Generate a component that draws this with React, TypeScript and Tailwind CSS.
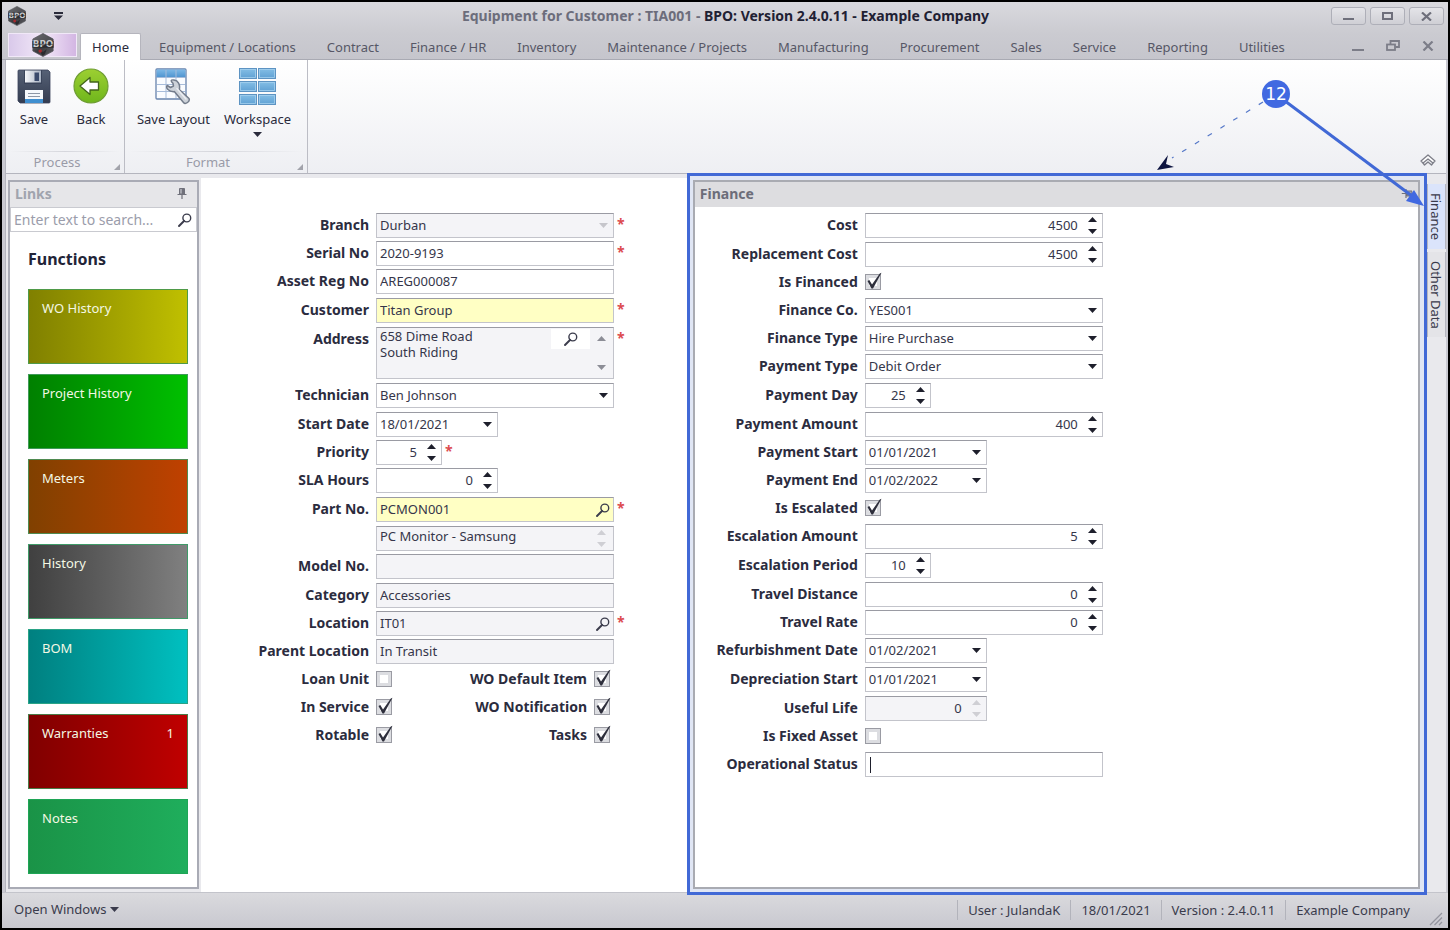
import React, { useId, useState } from "react";

type Option = { value: string };

/* ---------- small drawings ---------- */

function Triangle({ up = false, className = "" }: { up?: boolean; className?: string }) {
  return (
    <svg width="9" height="5" viewBox="0 0 9 5" className={`shrink-0 ${className}`} aria-hidden="true">
      <path d={up ? "M0 5L4.5 0L9 5Z" : "M0 0H9L4.5 5Z"} fill="currentColor" />
    </svg>
  );
}

function Magnifier() {
  return (
    <svg width="14" height="14" viewBox="0 0 14 14" fill="none" aria-hidden="true">
      <circle cx="8.8" cy="5" r="3.9" stroke="#3b3c4c" strokeWidth="1.4" />
      <path d="M6 8L1 13" stroke="#3b3c4c" strokeWidth="1.9" strokeLinecap="round" />
    </svg>
  );
}

function HexLogo({ className }: { className: string }) {
  return (
    <svg viewBox="0 0 24 26" className={className} aria-hidden="true">
      <defs>
        <linearGradient id="hex" x1="0" y1="0" x2="1" y2="1">
          <stop offset="0" stopColor="#77787c" />
          <stop offset="0.5" stopColor="#3a3b3f" />
          <stop offset="1" stopColor="#5b5b60" />
        </linearGradient>
      </defs>
      <path d="M12 0.5L23 6.5V19.5L12 25.5L1 19.5V6.5Z" fill="url(#hex)" stroke="#55565b" strokeWidth="0.8" />
      <path d="M12 1L23 7L12 12L1 7Z" fill="#606165" opacity="0.6" />
      <path d="M8 18L12 20.500L16 17.500L14 23L11 24.500Z" fill="#2a2a2e" />
      <rect x="0.500" y="8.500" width="23" height="7.500" fill="#2c2d31" />
      <text x="12" y="15.500" textAnchor="middle" fontFamily="DejaVu Sans, sans-serif" fontWeight="bold" fontSize="9.500" fill="#c9cacd">
        BPO
      </text>
      <path d="M1 12.300H23" stroke="#2c2d31" strokeWidth="0.700" />
      <circle cx="9" cy="19.500" r="1.900" fill="#a52a2e" />
    </svg>
  );
}

function SaveIcon() {
  return (
    <svg width="34" height="35" viewBox="0 0 34 35" aria-hidden="true">
      <defs>
        <linearGradient id="sv" x1="0" y1="0" x2="0" y2="1">
          <stop offset="0" stopColor="#566176" />
          <stop offset="1" stopColor="#333c50" />
        </linearGradient>
        <linearGradient id="svm" x1="0" y1="0" x2="1" y2="0">
          <stop offset="0" stopColor="#f4f6f9" />
          <stop offset="1" stopColor="#a9b3c3" />
        </linearGradient>
      </defs>
      <path d="M1 2Q1 1 2 1H31L33 3V33Q33 34 32 34H3L1 32Z" fill="url(#sv)" stroke="#3a435a" strokeWidth="0.8" />
      <rect x="7" y="1" width="18" height="14" fill="#3a445a" />
      <rect x="8" y="1.500" width="16" height="12" fill="url(#svm)" />
      <rect x="17.500" y="3.500" width="4.500" height="8.500" fill="#3a4a6c" />
      <rect x="8" y="21" width="18" height="13" fill="#f5f8fb" />
      <rect x="8" y="30" width="18" height="4" fill="#3f8fd0" />
      <path d="M11 24.500H23M11 27.500H23" stroke="#8d97a6" strokeWidth="1.200" />
    </svg>
  );
}

function BackIcon() {
  return (
    <svg width="36" height="36" viewBox="0 0 36 36" aria-hidden="true">
      <defs>
        <linearGradient id="bk" x1="0" y1="0" x2="0" y2="1">
          <stop offset="0" stopColor="#9ccf32" />
          <stop offset="1" stopColor="#6fb61c" />
        </linearGradient>
      </defs>
      <circle cx="18" cy="18" r="17" fill="url(#bk)" stroke="#6f9d34" strokeWidth="1.200" />
      <path d="M7 18L17 9.500V14H25.500V22H17V26.500Z" fill="#fff" stroke="#41641a" strokeWidth="1.300" strokeLinejoin="round" />
    </svg>
  );
}

function LayoutIcon() {
  return (
    <svg width="36" height="37" viewBox="0 0 36 37" aria-hidden="true">
      <defs>
        <linearGradient id="ly" x1="0" y1="0" x2="0" y2="1">
          <stop offset="0" stopColor="#7db8e6" />
          <stop offset="1" stopColor="#4d93cf" />
        </linearGradient>
      </defs>
      <rect x="1" y="1" width="30" height="30" rx="1" fill="#fafcff" stroke="#6783ad" strokeWidth="1.300" />
      <rect x="1.500" y="1.500" width="29" height="8" fill="url(#ly)" />
      <path d="M11 2V30M21 2V30M2 9.500H30M2 16.500H30M2 23.500H30" stroke="#a7bcda" strokeWidth="1" />
      <path
        d="M19 12C15.500 11.500 15.500 13 18 15.300L18.500 18L15.500 19.500L12.200 17.500C10.500 19.500 13.500 24 19.300 23.600L28.500 34.500C30.500 37 35.300 33.300 34 30.500L24.300 21.500C25.500 16.500 23 12.500 19 12Z"
        fill="#cdd2d9"
        stroke="#737c8b"
        strokeWidth="1.500"
        strokeLinejoin="round"
      />
      <path d="M22 20.500L31 31" stroke="#eceef2" strokeWidth="1.500" strokeLinecap="round" />
    </svg>
  );
}

function WorkspaceIcon() {
  const cells = [
    [0, 0], [19, 0], [0, 13], [19, 13], [0, 26], [19, 26],
  ];
  return (
    <svg width="37" height="37" viewBox="0 0 37 37" aria-hidden="true">
      <defs>
        <linearGradient id="ws" x1="0" y1="0" x2="0" y2="1">
          <stop offset="0" stopColor="#85bfe6" />
          <stop offset="1" stopColor="#5fa0d3" />
        </linearGradient>
      </defs>
      {cells.map(([x, y]) => (
        <g key={`${x}-${y}`}>
          <rect x={x + 0.5} y={y + 0.5} width="17" height="10" fill="url(#ws)" stroke="#5d93c2" />
          <rect x={x + 1.5} y={y + 1.5} width="15" height="8" fill="none" stroke="#a5d0ee" strokeWidth="0.800" />
        </g>
      ))}
    </svg>
  );
}

function Pin() {
  return (
    <svg width="10" height="11" viewBox="0 0 10 11" aria-hidden="true">
      <path d="M2.500 0.500H7.500V6H2.500Z" fill="#a5a6ae" stroke="#70717b" />
      <path d="M6 1V6" stroke="#70717b" strokeWidth="2" />
      <path d="M0.500 6.500H9.500M5 6.500V11" stroke="#70717b" strokeWidth="1.200" />
    </svg>
  );
}

function Corner() {
  return (
    <svg width="6" height="6" viewBox="0 0 6 6" className="mb-[3px] self-end" aria-hidden="true">
      <path d="M6 0V6H0Z" fill="#a2a3ab" />
    </svg>
  );
}

/* ---------- form parts ---------- */

const BOX = "flex h-[25px] border border-[#c3c4cb] border-t-[#9a9ba3]";
const TEXT = "min-w-0 flex-1 bg-transparent text-[13px] text-[#35364a] outline-none";
const LABEL = "mr-[7px] shrink-0 text-right text-[14px] leading-[23px] font-bold whitespace-nowrap text-[#2b2c3e]";
const WIDE = "w-[238px]";
const DATE = "w-[122px]";
const SPIN = "w-[66px]";

function Row({ label, id, tall, labelWidth, children, required }: {
  label: string; id: string; tall?: boolean; labelWidth: string; children: React.ReactNode; required?: boolean;
}) {
  return (
    <div className={`flex items-start ${tall ? "min-h-[29px]" : "min-h-[28px]"}`}>
      <label htmlFor={id} className={`${LABEL} ${labelWidth}`}>
        {label}
      </label>
      {children}
      {required && <span className="ml-[3px] text-[14px] leading-[21px] font-bold text-[#dc4a50]">*</span>}
    </div>
  );
}

function SpinButtons({ muted }: { muted?: boolean }) {
  return (
    <span className={`flex w-[19px] shrink-0 flex-col items-center justify-center gap-[7px] ${muted ? "text-[#cfcfd4]" : "text-[#1e1f2c]"}`}>
      <button type="button" aria-label="Increase" disabled={muted}><Triangle up className="block" /></button>
      <button type="button" aria-label="Decrease" disabled={muted}><Triangle className="block" /></button>
    </span>
  );
}

type Kind = "text" | "search" | "select" | "date" | "spin" | "check" | "address" | "memo";

type FieldDef = {
  label: string;
  kind: Kind;
  value?: string;
  tone?: "yellow" | "grey";
  size?: string;
  tall?: boolean;
  required?: boolean;
  checked?: boolean;
  muted?: boolean;
  caret?: boolean;
  second?: { label: string; checked: boolean };
};

function CheckBox({ id, checked }: { id: string; checked?: boolean }) {
  const [on, setOn] = useState(!!checked);
  return (
    <span className="relative mt-1 block size-4 shrink-0">
      <input
        id={id}
        type="checkbox"
        checked={on}
        onChange={(e) => setOn(e.target.checked)}
        className="block size-4 appearance-none border border-[#9a9ba3] bg-white shadow-[inset_0_0_0_3px_#dcdde1]"
      />
      {on && (
        <svg width="18" height="18" viewBox="0 0 18 18" className="pointer-events-none absolute -top-[2px] left-0" aria-hidden="true">
          <path d="M2.500 9L4.300 8L7 12.500L14.800 1.500L16.500 0.800L8 16.500H6.500Z" fill="#2e2f3c" />
        </svg>
      )}
    </span>
  );
}

function Field({ def, labelWidth }: { def: FieldDef; labelWidth: string }) {
  const id = useId();
  const tone = def.tone === "yellow" ? "bg-[#ffffc4]" : def.tone === "grey" ? "bg-[#f4f4f7]" : "bg-white";
  const size = def.size ?? WIDE;
  let control: React.ReactNode = null;

  if (def.kind === "check") {
    control = (
      <>
        <CheckBox id={id} checked={def.checked} />
        {def.second && (
          <>
            <label htmlFor={`${id}-b`} className={`${LABEL} w-[195px]`}>
              {def.second.label}
            </label>
            <CheckBox id={`${id}-b`} checked={def.second.checked} />
          </>
        )}
      </>
    );
  } else if (def.kind === "select") {
    const options: Option[] = [{ value: def.value ?? "" }];
    control = (
      <span className={`relative ${BOX} ${tone} ${size}`}>
        <select id={id} defaultValue={def.value} className={`${TEXT} appearance-none pl-[3px]`}>
          {options.map((o) => <option key={o.value}>{o.value}</option>)}
        </select>
        <span className={`pointer-events-none flex w-[19px] items-center justify-center ${def.muted ? "text-[#c6c6cb]" : "text-[#1e1f2c]"}`}>
          <Triangle />
        </span>
      </span>
    );
  } else if (def.kind === "date") {
    control = (
      <span className={`${BOX} ${tone} ${size}`}>
        <input id={id} defaultValue={def.value} className={`${TEXT} pl-[3px]`} />
        <button type="button" aria-label="Open calendar" className="flex w-[19px] shrink-0 items-center justify-center text-[#1e1f2c]">
          <Triangle />
        </button>
      </span>
    );
  } else if (def.kind === "spin") {
    control = (
      <span className={`${BOX} ${tone} ${size}`}>
        <input id={id} defaultValue={def.value} className={`${TEXT} pr-[5px] text-right`} />
        <SpinButtons muted={def.muted} />
      </span>
    );
  } else if (def.kind === "address") {
    control = (
      <span className={`flex h-[52px] border border-[#c3c4cb] border-t-[#9a9ba3] ${tone} ${size} mb-1`}>
        <textarea id={id} defaultValue={def.value} className={`${TEXT} resize-none overflow-hidden pl-[3px] leading-[16px]`} />
        <button type="button" aria-label="Find address" className="mt-px flex h-5 w-[39px] items-center justify-center bg-white"><Magnifier /></button>
        <span className="flex w-[23px] flex-col items-center justify-between py-2 text-[#8c8d96]">
          <Triangle up />
          <Triangle />
        </span>
      </span>
    );
  } else if (def.kind === "memo") {
    control = (
      <span className={`${BOX} ${tone} ${size}`}>
        <input id={id} aria-label="Part description" defaultValue={def.value} className={`${TEXT} pb-[3px] pl-[3px]`} />
        <span className="flex w-[23px] flex-col items-center justify-center gap-[7px] text-[#cfcfd4]">
          <Triangle up />
          <Triangle />
        </span>
      </span>
    );
  } else {
    control = (
      <span className={`${BOX} ${tone} ${size}`}>
        {def.caret && <span className="ml-1 h-4 w-px self-center bg-[#1e1f2c]" />}
        <input id={id} defaultValue={def.value} className={`${TEXT} pl-[3px]`} />
        {def.kind === "search" && (
          <button type="button" aria-label={`Find ${def.label}`} className="flex w-[21px] items-center justify-center"><Magnifier /></button>
        )}
      </span>
    );
  }

  return (
    <Row label={def.label} id={id} tall={def.tall} labelWidth={labelWidth} required={def.required}>
      {control}
    </Row>
  );
}

const EQUIPMENT: FieldDef[] = [
  { label: "Branch", kind: "select", value: "Durban", tone: "grey", muted: true, required: true },
  { label: "Serial No", kind: "text", value: "2020-9193", required: true },
  { label: "Asset Reg No", kind: "text", value: "AREG000087", tall: true },
  { label: "Customer", kind: "text", value: "Titan Group", tone: "yellow", required: true, tall: true },
  { label: "Address", kind: "address", value: "658 Dime Road\nSouth Riding", tone: "grey", required: true },
  { label: "Technician", kind: "select", value: "Ben Johnson", tall: true },
  { label: "Start Date", kind: "date", value: "18/01/2021", size: DATE },
  { label: "Priority", kind: "spin", value: "5", size: SPIN, required: true },
  { label: "SLA Hours", kind: "spin", value: "0", size: DATE, tall: true },
  { label: "Part No.", kind: "search", value: "PCMON001", tone: "yellow", required: true, tall: true },
  { label: "", kind: "memo", value: "PC Monitor - Samsung", tone: "grey" },
  { label: "Model No.", kind: "text", value: "", tone: "grey", tall: true },
  { label: "Category", kind: "text", value: "Accessories", tone: "grey" },
  { label: "Location", kind: "search", value: "IT01", tone: "grey", required: true },
  { label: "Parent Location", kind: "text", value: "In Transit", tone: "grey" },
  { label: "Loan Unit", kind: "check", second: { label: "WO Default Item", checked: true } },
  { label: "In Service", kind: "check", checked: true, second: { label: "WO Notification", checked: true } },
  { label: "Rotable", kind: "check", checked: true, second: { label: "Tasks", checked: true } },
];

const FINANCE: FieldDef[] = [
  { label: "Cost", kind: "spin", value: "4500", tall: true },
  { label: "Replacement Cost", kind: "spin", value: "4500" },
  { label: "Is Financed", kind: "check", checked: true },
  { label: "Finance Co.", kind: "select", value: "YES001" },
  { label: "Finance Type", kind: "select", value: "Hire Purchase" },
  { label: "Payment Type", kind: "select", value: "Debit Order", tall: true },
  { label: "Payment Day", kind: "spin", value: "25", size: SPIN, tall: true },
  { label: "Payment Amount", kind: "spin", value: "400" },
  { label: "Payment Start", kind: "date", value: "01/01/2021", size: DATE },
  { label: "Payment End", kind: "date", value: "01/02/2022", size: DATE },
  { label: "Is Escalated", kind: "check", checked: true },
  { label: "Escalation Amount", kind: "spin", value: "5", tall: true },
  { label: "Escalation Period", kind: "spin", value: "10", size: SPIN, tall: true },
  { label: "Travel Distance", kind: "spin", value: "0" },
  { label: "Travel Rate", kind: "spin", value: "0" },
  { label: "Refurbishment Date", kind: "date", value: "01/02/2021", size: DATE, tall: true },
  { label: "Depreciation Start", kind: "date", value: "01/01/2021", size: DATE, tall: true },
  { label: "Useful Life", kind: "spin", value: "0", size: DATE, tone: "grey", muted: true },
  { label: "Is Fixed Asset", kind: "check" },
  { label: "Operational Status", kind: "text", value: "", caret: true },
];

const MENU = [
  "Equipment / Locations", "Contract", "Finance / HR", "Inventory", "Maintenance / Projects", "Manufacturing",
  "Procurement", "Sales", "Service", "Reporting", "Utilities",
];

const TILES = [
  { name: "WO History", look: "from-[#808000] to-[#c0c000] border-[#4f9a48]" },
  { name: "Project History", look: "from-[#008000] to-[#00c000] border-[#3f9a58]" },
  { name: "Meters", look: "from-[#804000] to-[#c04000] border-[#4f8a50]" },
  { name: "History", look: "from-[#404040] to-[#808080] border-[#3f9a68]" },
  { name: "BOM", look: "from-[#008080] to-[#00c0c0] border-[#2aa386]" },
  { name: "Warranties", count: "1", look: "from-[#800000] to-[#c00000] border-[#4a7a48]" },
  { name: "Notes", look: "from-[#1a9347] to-[#1fae5c] border-[#1fa556]" },
];

/* ---------- window ---------- */

function TitleBar() {
  const button = "flex h-[18px] w-[35px] items-center justify-center rounded-[3px] border border-[#aeafb8] bg-gradient-to-b from-[#e4e4e8] to-[#cfcfd5]";
  return (
    <header className="flex h-[31px] items-start bg-gradient-to-b from-[#d9d9de] to-[#cbcbd1] pr-1 pl-[5px]">
      <div className="flex flex-1 items-center gap-[27px] pt-1">
        <HexLogo className="h-5 w-5" />
        <button type="button" aria-label="Customise toolbar">
          <svg width="9" height="8" viewBox="0 0 9 8" aria-hidden="true">
            <path d="M0 0H9V2H0ZM0 3.500H9L4.500 8Z" fill="#2a2b3a" />
          </svg>
        </button>
      </div>
      <h1 className="pt-1 text-[14px] leading-5 font-bold text-[#1f2133]">
        <span className="text-[#6c6d7b]">Equipment for Customer : TIA001 - </span>
        BPO: Version 2.4.0.11 - Example Company
      </h1>
      <div className="flex flex-1 justify-end gap-1 pt-[5px]">
        <button type="button" aria-label="Minimise" className={button}>
          <svg width="11" height="10"><path d="M0 8H11" stroke="#6e6f7b" strokeWidth="2" /></svg>
        </button>
        <button type="button" aria-label="Maximise" className={button}>
          <svg width="11" height="9"><rect x="1" y="1" width="9" height="6" fill="none" stroke="#6e6f7b" strokeWidth="2" /></svg>
        </button>
        <button type="button" aria-label="Close" className={button}>
          <svg width="11" height="9"><path d="M1 0.500L10 8.500M10 0.500L1 8.500" stroke="#6e6f7b" strokeWidth="2.200" /></svg>
        </button>
      </div>
    </header>
  );
}

function Tabs() {
  return (
    <nav className="flex h-[27px] items-stretch bg-gradient-to-b from-[#cbcbd1] to-[#c5c5cc] pr-[14px] pl-[6px] text-[13px] text-[#565766] shadow-[inset_0_-1px_0_#a9aab3]">
      <button type="button" aria-label="Application menu" className="mb-[3px] flex w-[69px] items-center justify-center border border-[#f1e8f8] bg-gradient-to-r from-[#d9c9ea] via-[#f2e8f8] to-[#d3b6e3]">
        <HexLogo className="h-6 w-6" />
      </button>
      <button type="button" className="ml-[3px] w-[61px] rounded-t-[2px] border border-b-0 border-[#b5b5bd] bg-white pt-px text-[#2a2b3c]">Home</button>
      <div className="ml-[18px] flex flex-1 gap-[31px]">
        {MENU.map((m) => (
          <button type="button" key={m} className="pt-[2px] whitespace-nowrap">{m}</button>
        ))}
      </div>
      <div className="flex items-center gap-[22px] pb-[2px]">
        <button type="button" aria-label="Minimise child window">
          <svg width="12" height="12" className="block"><path d="M0 10H12" stroke="#7c7d88" strokeWidth="2" /></svg>
        </button>
        <button type="button" aria-label="Restore child window">
          <svg width="14" height="11" fill="none" stroke="#7c7d88" strokeWidth="1.800" className="block">
            <path d="M4.500 4V1H13V7H9.500" /><rect x="1" y="4.500" width="8" height="5.500" />
          </svg>
        </button>
        <button type="button" aria-label="Close child window">
          <svg width="12" height="10" className="block"><path d="M1.500 0.500L10.500 9.500M10.500 0.500L1.500 9.500" stroke="#7c7d88" strokeWidth="2.200" /></svg>
        </button>
      </div>
    </nav>
  );
}

function Tool({ icon, label, menu }: { icon: React.ReactNode; label: string; menu?: boolean }) {
  return (
    <button type="button" className="flex flex-col items-center text-[13px] leading-5 whitespace-nowrap text-[#2a2b3c]">
      <span className="mb-[2px] flex h-[42px] items-center">{icon}</span>
      <span>{label}</span>
      {menu && <Triangle className="mt-[3px]" />}
    </button>
  );
}

function Group({ name, children, className }: { name: string; children: React.ReactNode; className: string }) {
  return (
    <section aria-label={name} className={`flex flex-col border-r border-[#bcbdc5] ${className}`}>
      <div className="flex flex-1 items-start justify-center gap-[14px] pt-[5px] pr-1">{children}</div>
      <div className="mx-1 flex items-center bg-[linear-gradient(to_right,transparent,#d5d6dc,transparent)] bg-[length:100%_1px] bg-no-repeat">
        <span className="flex-1 pr-[10px] text-center text-[13px] leading-[22px] text-[#9a9ba8]">{name}</span>
        <Corner />
      </div>
    </section>
  );
}

function Ribbon() {
  return (
    <div className="ml-[3px] mr-[2px] flex h-[114px] border-b border-l border-[#b4b5be] bg-gradient-to-b from-white to-[#eeeff3]">
      <Group name="Process" className="w-[119px]">
        <div className="flex gap-[22px]">
          <Tool icon={<SaveIcon />} label="Save" />
          <Tool icon={<BackIcon />} label="Back" />
        </div>
      </Group>
      <Group name="Format" className="w-[183px]">
        <Tool icon={<LayoutIcon />} label="Save Layout" />
        <Tool icon={<WorkspaceIcon />} label="Workspace" menu />
      </Group>
      <div className="flex flex-1 items-end justify-end pr-[10px] pb-[7px]">
        <button type="button" aria-label="Collapse ribbon">
          <svg width="16" height="12" viewBox="0 0 16 12" fill="none" stroke="#7d7e88" strokeWidth="1.300" strokeLinejoin="round" className="block">
            <path d="M1 7L8 1L15 7L13 9L8 5L3 9Z" fill="#fff" />
            <path d="M3 9L4.500 11L8 8L11.500 11L13 9" />
          </svg>
        </button>
      </div>
    </div>
  );
}

function Links() {
  return (
    <aside className="mt-[6px] mb-[3px] flex w-[191px] shrink-0 flex-col border-2 border-[#a9abb5] bg-white">
      <div className="flex h-[25px] items-center justify-between bg-[#e6e6e9] pr-[10px] pb-[2px] pl-[5px]">
        <h2 className="text-[14px] font-bold text-[#a0a4ae]">Links</h2>
        <button type="button" aria-label="Pin links"><Pin /></button>
      </div>
      <div className="flex h-[25px] border border-[#c9cad0]">
        <input aria-label="Search links" placeholder="Enter text to search..." className="min-w-0 flex-1 pl-[3px] text-[14px] outline-none placeholder:text-[#9b9dab]" />
        <button type="button" aria-label="Search" className="flex w-[22px] items-center justify-center"><Magnifier /></button>
      </div>
      <div className="pt-4 pr-[9px] pl-[18px]">
        <h3 className="mb-[19px] text-[16px] leading-[22px] font-bold text-[#222437]">Functions</h3>
        <div className="flex flex-col gap-[10px]">
          {TILES.map((t) => (
            <button type="button" key={t.name} className={`flex h-[75px] w-full items-start justify-between border bg-gradient-to-r px-[13px] pt-2 text-[13px] leading-5 text-[#f4f8e4] ${t.look}`}>
              <span>{t.name}</span>
              <span>{t.count}</span>
            </button>
          ))}
        </div>
      </div>
    </aside>
  );
}

function StatusBar() {
  return (
    <footer className="flex h-9 items-center border-t border-[#c3c4cb] bg-gradient-to-b from-[#dadade] to-[#c8c8cf] pb-[2px] pl-3 text-[13px] text-[#3a3b4c]">
      <button type="button" className="flex flex-1 items-center gap-1">
        Open Windows <Triangle />
      </button>
      {["User : JulandaK", "18/01/2021", "Version : 2.4.0.11", "Example Company"].map((s) => (
        <span key={s} className="border-l border-[#b2b3bb] pr-[10px] pl-[10px] leading-5">{s}</span>
      ))}
      <svg width="16" height="16" viewBox="0 0 16 16" className="mr-1 ml-2 self-end" stroke="#94959f" strokeWidth="1.300" aria-hidden="true">
        <path d="M2 15L14 3M6.500 15L14 7.500M11 15L14 12" />
      </svg>
    </footer>
  );
}

function Callout() {
  return (
    <svg width="300" height="150" viewBox="1148 70 300 150" className="pointer-events-none absolute top-[68px] right-0 z-20" aria-hidden="true">
      <path d="M1263 102L1172 158" stroke="#5578c8" strokeWidth="1.200" strokeDasharray="5 10" />
      <path d="M1157 170L1168 155L1166 164L1174 167Z" fill="#0d1440" />
      <path d="M1285 101L1412 196" stroke="#4169d6" strokeWidth="3" />
      <path d="M1424 206L1406 201L1414 190Z" fill="#4169e1" />
      <circle cx="1276" cy="94" r="14" fill="#4169e1" />
      <text x="1276" y="100" textAnchor="middle" fontFamily="DejaVu Sans, sans-serif" fontSize="17" fill="#fff">12</text>
    </svg>
  );
}

export default function App() {
  return (
    <div className="relative flex min-h-screen flex-col border-2 border-black bg-[#c9c9d1] font-['Noto_Sans',sans-serif]">
      <TitleBar />
      <Tabs />
      <Ribbon />
      <main className="mr-[2px] ml-[3px] flex flex-1 border-l border-[#b4b5be] bg-[#e9e9ed] pl-[2px]">
        <Links />
        <form className="mt-1 ml-[2px] flex flex-[491] flex-col bg-white pt-[35px]">
          {EQUIPMENT.map((f) => <Field key={f.label} def={f} labelWidth="w-[168px]" />)}
        </form>
        <section aria-label="Finance" className="relative z-10 -mt-px -mb-[3px] flex flex-[735] flex-col border-[3px] border-[#4169d6] bg-[#e0e6f4] pt-1 pr-1 pb-[3px] pl-[3px]">
          <div className="flex flex-1 flex-col border-2 border-[#a9abb2] bg-white">
            <div className="flex h-[25px] items-center justify-between bg-[#dddde0] pr-[6px] pb-[2px] pl-[5px]">
              <h2 className="text-[14px] font-bold text-[#6c6d79]">Finance</h2>
              <button type="button" aria-label="Pin finance" className="rotate-90"><Pin /></button>
            </div>
            <form className="flex flex-col pt-[6px]">
              {FINANCE.map((f) => <Field key={f.label} def={f} labelWidth="w-[163px]" />)}
            </form>
          </div>
        </section>
        <div className="flex w-[19px] shrink-0 flex-col gap-[3px] pt-[10px] text-[13px] text-[#3a3b4c]">
          <button type="button" className="h-[65px] border-y border-[#b5b6bf] bg-[#dbe4fb] [writing-mode:vertical-rl]">Finance</button>
          <button type="button" className="h-[85px] border-y border-[#b5b6bf] bg-[#e4e4e8] [writing-mode:vertical-rl]">Other Data</button>
        </div>
      </main>
      <StatusBar />
      <Callout />
    </div>
  );
}
